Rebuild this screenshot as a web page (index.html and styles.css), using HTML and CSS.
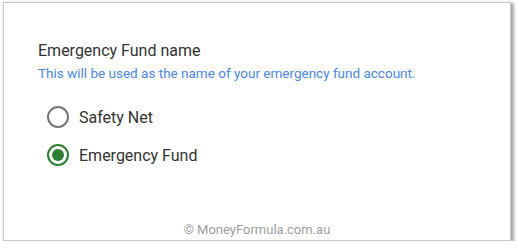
FILE: index.html
```html
<!DOCTYPE html>
<html>
<head>
<meta charset="utf-8">
<link rel="stylesheet" href="styles.css">
</head>
<body>
<div class="card">
  <div class="field">
    <div class="label">Emergency Fund name</div>
    <div class="hint">This will be used as the name of your emergency fund account.</div>
    <div class="options">
      <div class="option">
        <span class="radio"></span>
        <span class="opt-text">Safety Net</span>
      </div>
      <div class="option">
        <span class="radio checked"></span>
        <span class="opt-text">Emergency Fund</span>
      </div>
    </div>
  </div>
  <div class="footer">© MoneyFormula.com.au</div>
</div>
</body>
</html>
```
FILE: styles.css
```css
html, body {
  margin: 0;
  padding: 0;
  background: #ffffff;
}
body {
  font-family: Roboto, "Liberation Sans", sans-serif;
}
.card {
  box-sizing: border-box;
  margin: 2px 0 0 3px;
  width: 508px;
  height: 239px;
  border: 1px solid #c8c8c8;
  background: #fff;
  box-shadow: 2px 2px 3px 1px rgba(0,0,0,0.35);
  display: flex;
  flex-direction: column;
  padding: 38px 0 0 34px;
}
.field {
  flex: 1;
}
.label {
  font-size: 16px;
  color: #333333;
  line-height: 20px;
}
.hint {
  font-size: 13.5px;
  color: #4a88e4;
  line-height: 18px;
  margin-top: 3px;
}
.options {
  margin-top: 24px;
  display: flex;
  flex-direction: column;
  gap: 16px;
}
.option {
  display: flex;
  align-items: center;
  gap: 10px;
  height: 22px;
  padding-left: 9px;
}
.radio {
  box-sizing: border-box;
  width: 22px;
  height: 22px;
  border: 2px solid #757575;
  border-radius: 50%;
  display: flex;
  align-items: center;
  justify-content: center;
}
.radio.checked {
  border-color: #2e7d32;
}
.radio.checked::after {
  content: "";
  width: 12px;
  height: 12px;
  border-radius: 50%;
  background: #2e7d32;
}
.opt-text {
  font-size: 16px;
  color: #333333;
}
.footer {
  font-size: 13px;
  color: #9e9e9e;
  text-align: center;
  padding: 0 34px 1px 0;
  line-height: 18px;
}
```
